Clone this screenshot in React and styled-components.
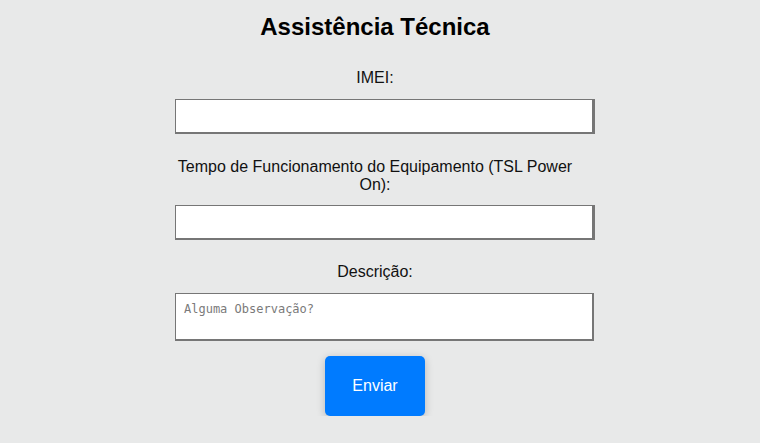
import React from "react";
import styled, { createGlobalStyle } from "styled-components";

const GlobalStyle = createGlobalStyle`
  html, body {
    margin: 0;
    padding: 0;
    background: #e8e9e9;
    font-family: "Liberation Sans", Arial, sans-serif;
  }
`;

const Page = styled.div`
  display: flex;
  flex-direction: column;
  align-items: center;
  padding: 13px 10px 0 0;
`;

const Title = styled.h1`
  margin: 0 0 28px;
  font-size: 24px;
  line-height: 28px;
  font-weight: bold;
  color: #000;
`;

const Form = styled.form`
  width: 400px;
  display: flex;
  flex-direction: column;
  align-items: flex-start;
`;

const Field = styled.div`
  width: 100%;
  margin-bottom: ${(p) => p.$gap}px;
`;

const Label = styled.label`
  display: block;
  text-align: center;
  font-size: 16px;
  line-height: 18px;
  color: #111;
  margin-bottom: ${(p) => p.$gap || 12}px;
`;

const Input = styled.input`
  display: block;
  box-sizing: border-box;
  width: 420px;
  height: 35px;
  margin: 0;
  padding: 8px;
  background: #fff;
  border-style: solid;
  border-color: #767676;
  border-width: 1px 3px 2px 1px;
  border-radius: 0;
  font-size: 14px;
  outline: none;
`;

const TextArea = styled.textarea`
  display: block;
  box-sizing: border-box;
  width: 419px;
  height: 48px;
  margin: 0;
  padding: 8px;
  background: #fff;
  border-style: solid;
  border-color: #767676;
  border-width: 1px 2px 2px 1px;
  border-radius: 0;
  resize: none;
  font-family: "DejaVu Sans Mono", "Liberation Mono", monospace;
  font-size: 12px;
  line-height: 15px;
  outline: none;
  &::placeholder {
    color: #7a7a7a;
  }
`;

const ButtonRow = styled.div`
  width: 100%;
  display: flex;
  justify-content: center;
`;

const Button = styled.button`
  width: 100px;
  height: 60px;
  margin: 0;
  border: none;
  border-radius: 5px;
  background: #007bff;
  color: #fff;
  font-family: "Liberation Sans", Arial, sans-serif;
  font-size: 16px;
  box-shadow: 0 2px 8px rgba(0, 0, 0, 0.22);
  cursor: pointer;
`;

export default function App() {
  return (
    <>
      <GlobalStyle />
      <Page>
        <Title>Assistência Técnica</Title>
        <Form onSubmit={(e) => e.preventDefault()}>
          <Field $gap={24}>
            <Label $gap={12}>IMEI:</Label>
            <Input type="text" />
          </Field>
          <Field $gap={23}>
            <Label $gap={11}>
              Tempo de Funcionamento do Equipamento (TSL Power On):
            </Label>
            <Input type="text" />
          </Field>
          <Field $gap={15}>
            <Label $gap={12}>Descrição:</Label>
            <TextArea placeholder="Alguma Observação?" />
          </Field>
          <ButtonRow>
            <Button type="submit">Enviar</Button>
          </ButtonRow>
        </Form>
      </Page>
    </>
  );
}
